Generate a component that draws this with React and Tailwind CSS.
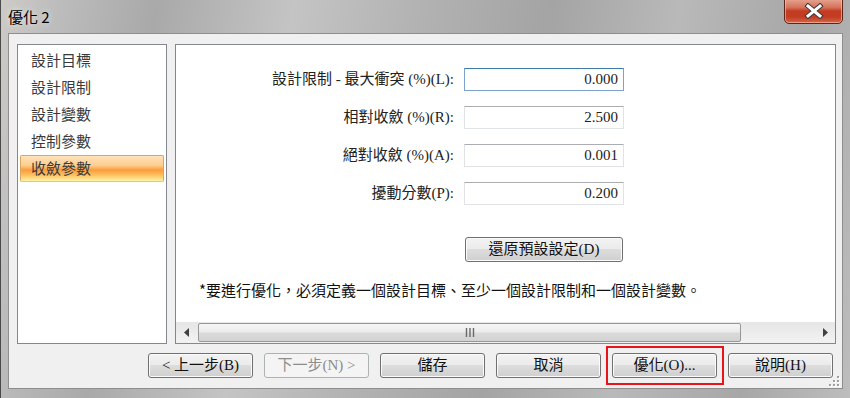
import React from "react";
import clsx from "clsx";

// =========================
// SMALL PARTS
// =========================

const fontBody = "font-['Liberation_Serif','Noto_Sans_CJK_TC',serif]";

function Btn({ children, disabled, className }) {
  return (
    <div
      className={clsx(
        "w-[105px] h-[25px] rounded-[3px] border flex items-center justify-center text-[15px] leading-none",
        disabled
          ? "border-[#adb2b5] bg-[#f4f4f4] text-[#8d8d8d]"
          : "border-[#707070] bg-[linear-gradient(#f2f2f2_0%,#ebebeb_50%,#dddddd_50%,#cfcfcf_100%)] shadow-[inset_0_0_0_1px_#fbfbfb] text-[#111]",
        className
      )}
    >
      {children}
    </div>
  );
}

function Field({ value, focused }) {
  return (
    <div
      className={clsx(
        "h-[23px] w-[160px] bg-white border flex items-center justify-end pr-[5px] text-[15px] text-[#222]",
        focused
          ? "border-[#7da2ce] border-t-[#3d7bad]"
          : "border-[#dfe3e8] border-t-[#abadb3]"
      )}
    >
      {value}
    </div>
  );
}

const listItems = ["設計目標", "設計限制", "設計變數", "控制參數", "收斂參數"];

const fields = [
  { label: "設計限制 - 最大衝突 (%)(L):", value: "0.000", focused: true },
  { label: "相對收斂 (%)(R):", value: "2.500" },
  { label: "絕對收斂 (%)(A):", value: "0.001" },
  { label: "擾動分數(P):", value: "0.200" },
];

export default function App() {
  return (
    <div className="relative w-[850px] h-[398px] overflow-hidden border-l border-[#4a4a4a] bg-[linear-gradient(100deg,#cdcbc6_0%,#bdbdbd_6%,#a9a9a9_17%,#c4c4c4_32%,#b2b2b2_46%,#a4a4a4_60%,#b9b9b9_74%,#a7a7a7_88%,#bdbdbd_100%)] flex flex-col">

      {/* TITLE BAR */}

      <div className="h-[33px] shrink-0 flex items-start pl-[7px] pt-[6px]">
        <span className="font-['Noto_Sans_CJK_TC',sans-serif] text-[15px] leading-[22px] text-black [text-shadow:0_0_6px_rgba(255,255,255,0.8)]">
          優化 2
        </span>
      </div>

      {/* CLOSE BUTTON */}

      <div className="absolute left-[783px] top-[-2px] w-[59px] h-[26px] rounded-b-[5px] border border-[#5e2418] bg-[linear-gradient(#e6a592_0%,#d6735a_35%,#c43b20_50%,#c23d22_75%,#d8654a_100%)] shadow-[inset_0_0_0_1px_rgba(255,210,190,0.55)] flex items-center justify-center">
        <svg width="22" height="16" viewBox="0 0 22 16">
          <path d="M5 3 L17 13 M17 3 L5 13" stroke="#3a3a3a" strokeWidth="5" strokeLinecap="square" />
          <path d="M5 3 L17 13 M17 3 L5 13" stroke="#ffffff" strokeWidth="3" strokeLinecap="square" />
        </svg>
      </div>

      {/* CLIENT AREA */}

      <div className={clsx("flex-1 ml-[7px] mr-[7px] mb-[9px] bg-[#f0f0f0] border border-[#8e8e8e] relative flex flex-col pt-[10px] pl-[8px] pr-[6px]", fontBody)}>

        <div className="flex gap-[8px] h-[300px]">

          {/* LIST */}

          <div className="w-[150px] h-full bg-white border border-[#828790] pt-[2px] px-[2px]">
            {listItems.map((item, i) => (
              <div
                key={item}
                className={clsx(
                  "h-[27px] border rounded-[2px] pl-[10px] flex items-center text-[15px] text-[#3a3a3a] font-['Noto_Sans_CJK_TC',sans-serif]",
                  i === 4
                    ? "border-[#d9a860] border-b-[#f2c94a] bg-[linear-gradient(#fee3bd_0%,#fdcd8d_38%,#fb9c3c_56%,#fcc061_76%,#fff2a4_100%)]"
                    : "border-transparent"
                )}
              >
                {item}
              </div>
            ))}
          </div>

          {/* PANEL */}

          <div className="flex-1 h-full bg-white border border-[#828790] flex flex-col">

            <div className="grid grid-cols-[278px_160px] gap-x-[10px] gap-y-[15px] mt-[23px]">
              {fields.map((f) => (
                <React.Fragment key={f.label}>
                  <div className="h-[23px] flex items-center justify-end text-[15px] text-[#222] whitespace-nowrap">
                    {f.label}
                  </div>
                  <Field value={f.value} focused={f.focused} />
                </React.Fragment>
              ))}
            </div>

            <Btn className="w-[158px] h-[24px] ml-[289px] mt-[32px]">還原預設設定(D)</Btn>

            <div className="ml-[23px] mt-[18px] text-[15px] text-[#111] leading-[20px] font-['Noto_Sans_CJK_TC',sans-serif]">
              *要進行優化，必須定義一個設計目標、至少一個設計限制和一個設計變數。
            </div>

            {/* SCROLLBAR */}

            <div className="mt-auto h-[21px] bg-[linear-gradient(#e6e6e6,#f2f2f2)] flex items-center">
              <div className="w-[21px] h-full flex items-center justify-center">
                <svg width="6" height="9" viewBox="0 0 6 9">
                  <path d="M5 0 L0 4.5 L5 9 Z" fill="#404040" />
                </svg>
              </div>
              <div className="w-[543px] h-[19px] ml-[1px] rounded-[2px] border border-[#979797] bg-[linear-gradient(#f6f6f6_0%,#ececec_45%,#dadada_55%,#d2d2d2_100%)] flex items-center justify-center">
                <svg width="10" height="9" viewBox="0 0 10 9">
                  <path d="M1.5 0 V9 M5 0 V9 M8.5 0 V9" stroke="#6a6a6a" strokeWidth="1.4" />
                </svg>
              </div>
              <div className="flex-1" />
              <div className="w-[21px] h-full flex items-center justify-center">
                <svg width="6" height="9" viewBox="0 0 6 9">
                  <path d="M1 0 L6 4.5 L1 9 Z" fill="#404040" />
                </svg>
              </div>
            </div>

          </div>
        </div>

        {/* BUTTON ROW */}

        <div className="flex justify-end gap-[11px] mt-[9px] pr-[3px]">
          <Btn>&lt;&nbsp;上一步(B)</Btn>
          <Btn disabled>下一步(N)&nbsp;&gt;</Btn>
          <Btn>儲存</Btn>
          <Btn>取消</Btn>
          <div className="relative">
            <Btn>優化(O)...</Btn>
            <div className="absolute -left-[6px] -right-[7px] -top-[7px] -bottom-[7px] border-2 border-[#e8141a]" />
          </div>
          <Btn>說明(H)</Btn>
        </div>

        {/* GRIP */}

        <svg className="absolute right-[2px] bottom-[1px]" width="11" height="11" viewBox="0 0 11 11">
          {[[8, 0], [8, 4], [4, 4], [8, 8], [4, 8], [0, 8]].map(([x, y]) => (
            <g key={`${x}-${y}`}>
              <rect x={x + 1} y={y + 1} width="2" height="2" fill="#ffffff" />
              <rect x={x} y={y} width="2" height="2" fill="#a0a0a0" />
            </g>
          ))}
        </svg>

      </div>
    </div>
  );
}
